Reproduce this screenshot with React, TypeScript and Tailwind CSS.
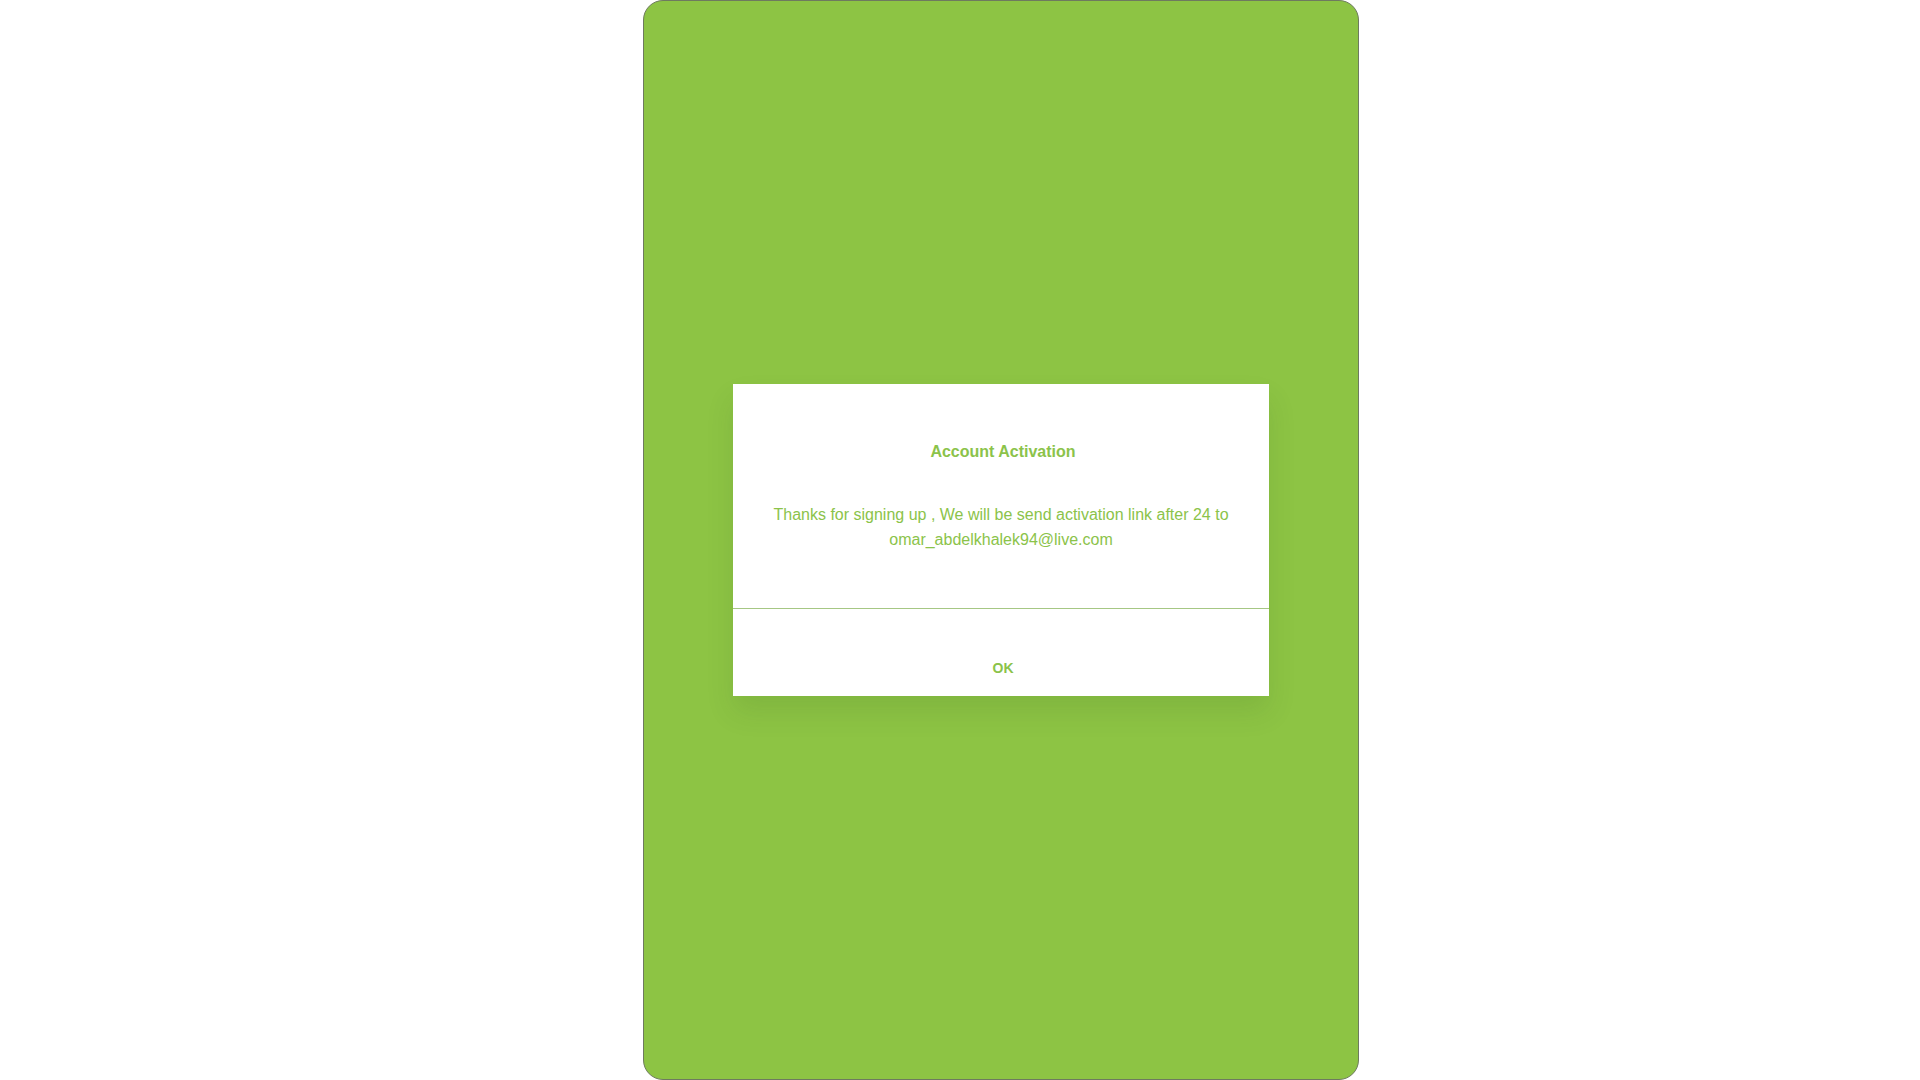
export default function App() {
  return (
    <div className="w-[1920px] h-[1080px] bg-white overflow-hidden" style={{ fontFamily: '"Liberation Sans", Arial, sans-serif' }}>
      <div className="ml-[643px] w-[716px] h-[1080px] bg-[#8dc444] border border-[#6e7a5f] rounded-[20px] flex items-center justify-center">
        <div className="w-[536px] h-[312px] bg-white flex flex-col shadow-[0_16px_26px_rgba(40,80,30,0.12)]">
          <div className="pt-[59px] pl-[4px] text-center text-[16px] leading-[18px] font-bold text-[#8bc34a]">Account Activation</div>
          <div className="mt-[41px] px-[30px] text-center text-[16px] leading-[25px] text-[#8bc34a]">
            Thanks for signing up , We will be send activation link after 24 to
            <br />
            omar_abdelkhalek94@live.com
          </div>
          <div className="mt-auto h-[88px] border-t border-[#a6c784] flex flex-col items-center">
            <div className="pt-[51px] pl-[4px] text-[14px] leading-[16px] font-bold text-[#8bc34a]">OK</div>
          </div>
        </div>
      </div>
    </div>
  );
}
